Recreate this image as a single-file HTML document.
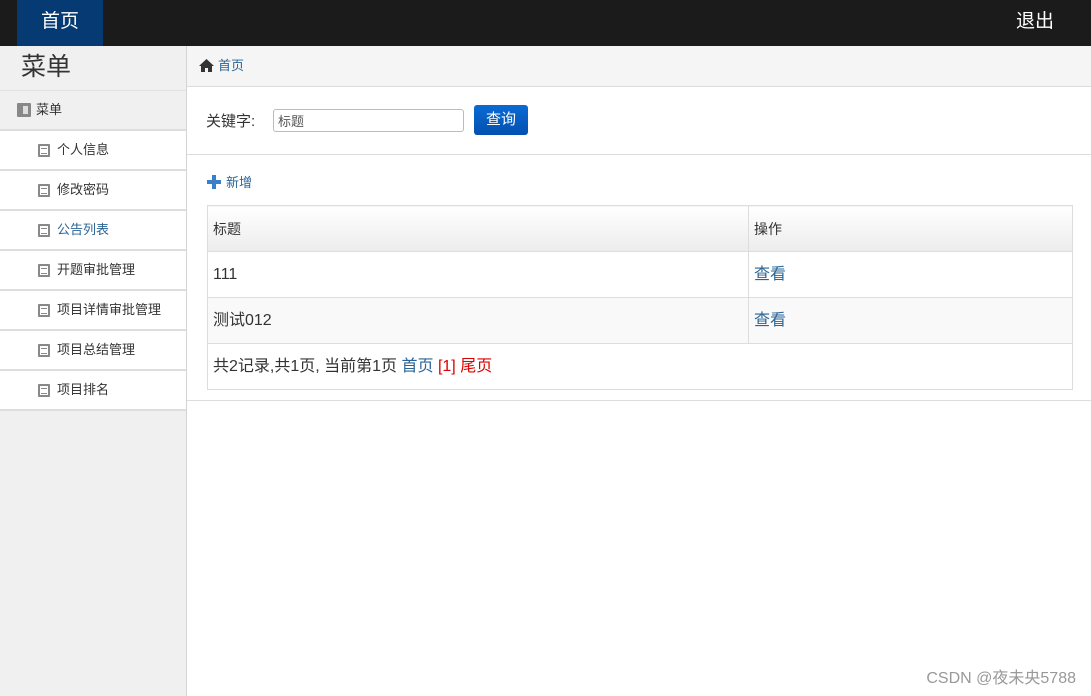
<!DOCTYPE html><html><head><meta charset="utf-8"><style>
*{margin:0;padding:0;box-sizing:border-box}
body{width:1091px;height:696px;overflow:hidden;background:#fff;font-family:"Liberation Sans","Noto Sans CJK SC",sans-serif;color:#333;position:relative}
.top{position:absolute;left:0;top:0;width:1091px;height:46px;background:#1b1b1b}
.home{position:absolute;left:17px;top:0;width:86px;height:46px;background:#063a73;color:#fff;font-size:19px;line-height:44px;text-align:center}
.out{position:absolute;right:37px;top:0;color:#fff;font-size:19px;line-height:44px}
.side{position:absolute;left:0;top:46px;width:187px;height:650px;background:#f0f0f0;border-right:1px solid #d4d4d4}
.side .t{height:45px;font-size:25px;line-height:42px;padding-left:21px;border-bottom:1px solid #e2e2e2}
.side .m{height:40px;font-size:13px;line-height:38px;padding-left:36px;border-bottom:2px solid #ddd;position:relative}
.side .i{height:40px;background:#fff;font-size:13px;line-height:38px;padding-left:57px;border-bottom:2px solid #ddd;position:relative}
.ic{position:absolute;left:38px;top:13px;width:12px;height:13px;border:2px solid #888;border-radius:1px;box-sizing:border-box}
.ic:after{content:"";position:absolute;left:1px;top:1.5px;width:6px;height:6px;border-top:1.5px solid #888;border-bottom:1.5px solid #888;box-sizing:border-box}
.mi{position:absolute;left:17px;top:12px;width:14px;height:14px;background:#888;border-radius:1px}
.mi:after{content:"";position:absolute;left:6px;top:3px;width:5px;height:8px;background:#ddd}
.bc{position:absolute;left:187px;top:46px;right:0;height:41px;background:#f5f5f5;border-bottom:1px solid #ddd;font-size:13px;line-height:40px;padding-left:31px;color:#2a6496}
.srch{position:absolute;left:187px;top:87px;right:0;height:68px;border-bottom:1px solid #ddd}
.lab{position:absolute;left:19px;top:23px;font-size:15px}
.inp{position:absolute;left:86px;top:22px;width:191px;height:23px;border:1px solid #bbb;border-radius:3px;font-size:13px;color:#555;padding:3px 4px;line-height:17px}
.btn{position:absolute;left:287px;top:18px;width:54px;height:30px;background:linear-gradient(#0a6bd3,#0350b0);border-radius:3px;color:#fff;font-size:15px;text-align:center;line-height:29px}
.cont{position:absolute;left:187px;top:155px;right:0;height:246px;border-bottom:1px solid #ddd}
.add{position:absolute;left:20px;top:18px;font-size:13px;color:#2a6496;line-height:20px}
.add b{display:inline-block;position:relative;width:14px;height:14px;vertical-align:-2px;margin-right:5px}
.add b:before{content:"";position:absolute;left:5px;top:0;width:4px;height:14px;background:#3a80c8}
.add b:after{content:"";position:absolute;left:0;top:5px;width:14px;height:4px;background:#3a80c8}
table{position:absolute;left:20px;top:50px;width:866px;border-collapse:collapse;font-size:16px}
td{border:1px solid #ddd;height:46px;padding-left:5px;vertical-align:middle;line-height:20px}
tr.h td{background:linear-gradient(#fff,#ececec);font-size:14px}
tr.g td{background:#f9f9f9}
a{color:#2a6496;text-decoration:none}
.red{color:#d00}
.wm{position:absolute;right:15px;bottom:8px;font-size:16px;color:#999}
</style></head><body>
<div class="top"><div class="home">首页</div><div class="out">退出</div></div>
<div class="side">
<div class="t">菜单</div>
<div class="m"><span class="mi"></span>菜单</div>
<div class="i"><span class="ic"></span>个人信息</div>
<div class="i"><span class="ic"></span>修改密码</div>
<div class="i" style="color:#2a6496"><span class="ic"></span>公告列表</div>
<div class="i"><span class="ic"></span>开题审批管理</div>
<div class="i"><span class="ic"></span>项目详情审批管理</div>
<div class="i"><span class="ic"></span>项目总结管理</div>
<div class="i"><span class="ic"></span>项目排名</div>
</div>
<div class="bc"><svg style="position:absolute;left:12px;top:13px" width="15" height="13" viewBox="0 0 15 13"><path d="M7.5 0L0 7h2v6h4V9h3v4h4V7h2z" fill="#333"/></svg>首页</div>
<div class="srch"><span class="lab">关键字:</span><div class="inp">标题</div><div class="btn">查询</div></div>
<div class="cont"><div class="add"><b></b>新增</div>
<table>
<tr class="h"><td style="width:541px">标题</td><td>操作</td></tr>
<tr><td>111</td><td><a>查看</a></td></tr>
<tr class="g"><td>测试012</td><td><a>查看</a></td></tr>
<tr><td colspan="2">共2记录,共1页, 当前第1页 <a>首页</a> <span class="red">[1]</span> <span class="red">尾页</span></td></tr>
</table></div>
<div class="wm">CSDN @夜未央5788</div>
</body></html>
